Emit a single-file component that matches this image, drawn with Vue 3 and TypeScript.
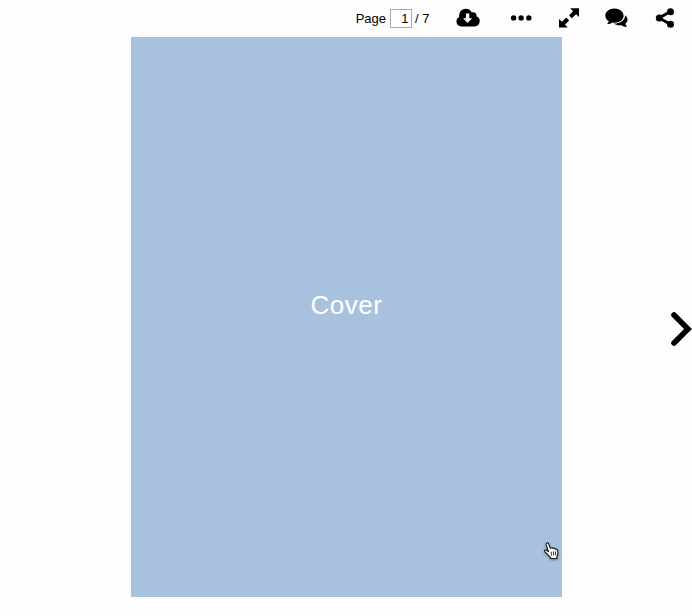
<script setup lang="ts">
import { ref } from 'vue'

const page = ref<string>('1')
const total: number = 7
</script>

<template>
  <div class="viewer">
    <header class="toolbar">
      <label class="pager">
        <span>Page</span>
        <input v-model="page" class="page-input" type="text" />
        <span>/ {{ total }}</span>
      </label>
      <button class="tool download" aria-label="Download">
        <svg width="24" height="20" viewBox="0 0 24 20">
          <path fill-rule="evenodd" d="M5.2 18.4A5 5 0 0 1 3.1 9C2.8 4.2 5.6.8 9.8.8c3 0 5 1.5 6 3.8 2.5-1.4 5.3.6 4.6 3.6A5.3 5.3 0 0 1 18.7 18.4ZM9.9 5.4v4.8H7l4.6 4.8 4.6-4.8h-2.9V5.4Z" />
        </svg>
      </button>
      <button class="tool" aria-label="More">
        <svg width="24" height="20" viewBox="0 0 24 20">
          <circle cx="4.6" cy="9.9" r="2.7" /><circle cx="12.1" cy="9.9" r="2.7" /><circle cx="19.8" cy="9.9" r="2.7" />
        </svg>
      </button>
      <button class="tool" aria-label="Fullscreen">
        <svg width="24" height="20" viewBox="0 0 24 20">
          <path d="M13.2.3H22V9L19.1 6.3 14.8 10.3 12 7.5 16 3.2ZM2 11.1l2.9 2.7 4.4-4.2 2.8 2.8L8 16.8l2.8 2.6H2Z" />
        </svg>
      </button>
      <button class="tool" aria-label="Comments">
        <svg width="24" height="20" viewBox="0 0 24 20">
          <path d="M20.2 7.2c3.2 2.7 3 6.3.2 8.5.2 1.2.9 2.1 1.9 3-2.2.3-4.2-.3-5.8-1.5-3 .5-5.8-.1-7.6-1.6C15.4 15.4 20.2 12.3 20.2 7.2Z" />
          <path d="M9.4.6c5 0 9.2 3.2 9.2 7.1s-4.1 7-9.2 7c-.7 0-1.5-.1-2.2-.2-1.4 1.1-3.3 1.7-5.3 1.6.9-.8 1.7-1.7 1.9-2.9C1.6 11.9.3 9.9.3 7.7.3 3.8 4.4.6 9.4.6Z" />
        </svg>
      </button>
      <button class="tool" aria-label="Share">
        <svg width="24" height="20" viewBox="0 0 24 20">
          <path d="M17.4 3.6 6.2 9.9l11.2 6.3" fill="none" stroke="#000" stroke-width="2.9" />
          <circle cx="17.5" cy="3.7" r="3.5" /><circle cx="6.3" cy="9.9" r="3.5" /><circle cx="17.5" cy="16.3" r="3.5" />
        </svg>
      </button>
    </header>
    <main class="stage">
      <section class="sheet">Cover</section>
      <button class="next" aria-label="Next page">
        <svg width="22" height="36" viewBox="0 0 22 36">
          <path d="M4 4 18 18 4 32" fill="none" stroke="#000" stroke-width="5.6" stroke-linecap="round" />
        </svg>
      </button>
    </main>
    <svg class="pointer" width="18" height="20" viewBox="0 0 18 20">
      <path d="M6.4 14.2 3 10.8C1.9 9.5 3.3 8.3 4.6 9.2L6.5 10.7 4.3 3.9C3.8 1.9 6 1.2 6.7 3L8.4 7.4C9.2 6.5 10.5 6.7 11 7.6 12 6.8 13.2 7.2 13.5 8.2c1.3-.3 1.9.5 2.1 1.7l.3 3.1-1 2.5v2H8.4v-1.2Z" />
      <path class="creases" d="M9.1 10.7l.5 3.8M11.4 10.5l.3 4M13.5 10.6l.1 3.7" />
    </svg>
  </div>
</template>

<style>
body {
  margin: 0;
  background: #fdfdfd;
}
</style>

<style scoped>
.viewer {
  position: relative;
  display: flex;
  flex-direction: column;
  width: 692px;
  height: 616px;
  overflow: hidden;
  background: #fdfdfd;
  font-family: "Liberation Sans", Arial, sans-serif;
}
.toolbar {
  display: flex;
  justify-content: flex-end;
  height: 37px;
  padding-right: 3px;
  box-sizing: border-box;
}
.pager {
  display: flex;
  align-items: center;
  gap: 3.5px;
  height: 37px;
  margin-right: 9.5px;
  font-size: 13px;
  color: #000;
}
.page-input {
  box-sizing: border-box;
  width: 22px;
  height: 19px;
  padding: 0 2px 0 0;
  border: 1px solid #aaa;
  border-radius: 0;
  background: #fff;
  font: 13px "Liberation Sans", Arial, sans-serif;
  text-align: right;
  outline: none;
}
button {
  display: flex;
  align-items: center;
  justify-content: center;
  padding: 0;
  border: 0;
  background: none;
}
.tool {
  width: 48px;
  height: 36px;
}
.download {
  width: 58px;
}
svg {
  display: block;
}
.stage {
  display: grid;
  grid-template-columns: 131px 431px 130px;
  height: 560px;
}
.sheet {
  grid-column: 2;
  display: flex;
  align-items: center;
  justify-content: center;
  box-sizing: border-box;
  padding-bottom: 24px;
  background: #a8c2de;
  color: #fff;
  font-size: 26px;
  letter-spacing: 0.5px;
}
.next {
  grid-column: 3;
  justify-content: flex-end;
  padding-top: 24px;
}
.pointer {
  position: absolute;
  left: 542px;
  top: 541px;
  fill: #fff;
  stroke: #1b1b1b;
  stroke-width: 1.1;
  stroke-linejoin: round;
  filter: drop-shadow(0 1px 1px rgba(0, 0, 0, 0.4));
}
.creases {
  fill: none;
  stroke-width: 0.9;
}
</style>
